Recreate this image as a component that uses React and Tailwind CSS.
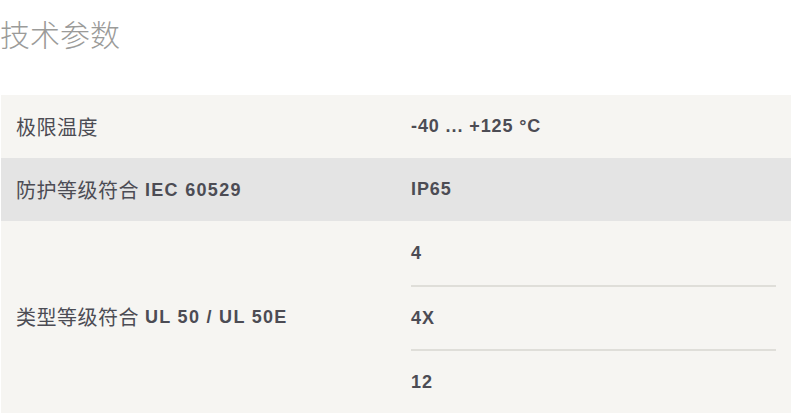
const ROWS = [
  { label: '极限温度', latin: '', values: ['-40 ... +125 °C'], bg: 'bg-[#f6f5f2]' },
  { label: '防护等级符合', latin: 'IEC 60529', values: ['IP65'], bg: 'bg-[#e4e4e4]' },
  { label: '类型等级符合', latin: 'UL 50 / UL 50E', values: ['4', '4X', '12'], bg: 'bg-[#f6f5f2]' },
]

export default function App() {
  return (
    <div className="w-[791px] h-[415px] bg-white overflow-hidden text-[#4c4c54] font-['Liberation_Sans','Noto_Sans_CJK_SC',sans-serif]">
      {/* Section title */}
      <h2 className="pt-[15px] h-[95px] text-[30px] leading-[36px] font-light text-[#9b9b99] font-['Noto_Sans_CJK_SC',sans-serif]">
        技术参数
      </h2>

      {/* Spec table */}
      <div className="ml-px w-[790px] flex flex-col">
        {ROWS.map(row => (
          <div key={row.label} className={`grid grid-cols-2 ${row.bg}`}>
            <div className="flex items-center px-[15px]">
              <span className="text-[20px] leading-none tracking-[0.5px] font-['Noto_Sans_CJK_SC',sans-serif]">{row.label}</span>
              {row.latin && (
                <span className="ml-[6px] text-[18px] leading-none font-bold tracking-[1.3px]">{row.latin}</span>
              )}
            </div>
            <div className="flex flex-col px-[15px]">
              {row.values.map((v, i) => (
                <div
                  key={v}
                  className={`flex items-center text-[18px] font-bold tracking-[0.9px] ${row.values.length > 1 ? 'h-[64px]' : 'h-[63px]'} ${i > 0 ? 'border-t-2 border-[#dfded9]' : ''}`}
                >
                  {v}
                </div>
              ))}
            </div>
          </div>
        ))}
      </div>
    </div>
  )
}
